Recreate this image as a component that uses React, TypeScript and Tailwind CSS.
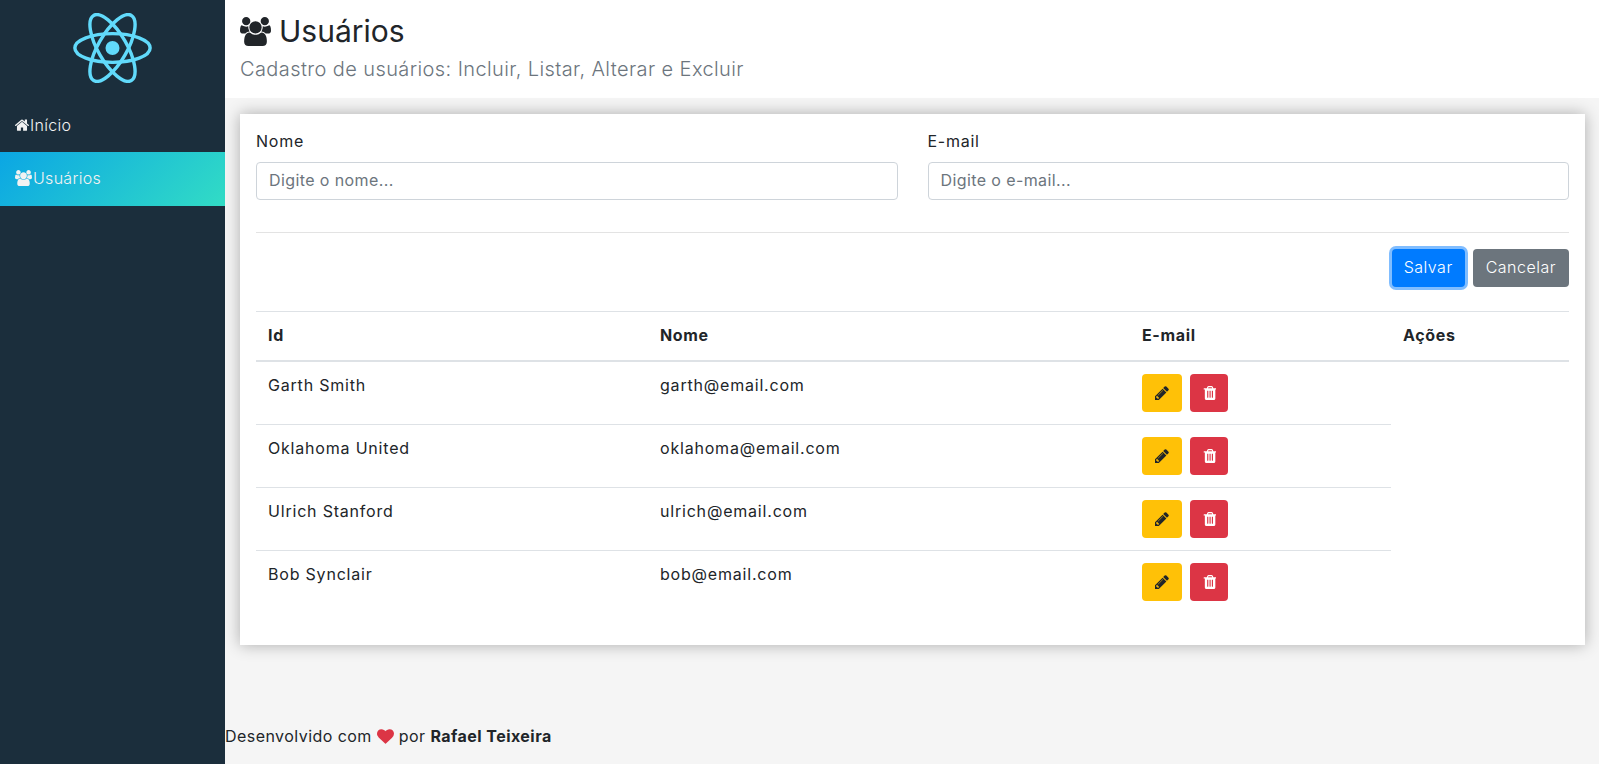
import React from 'react';

const users = [
  { name: 'Garth Smith', email: 'garth@email.com' },
  { name: 'Oklahoma United', email: 'oklahoma@email.com' },
  { name: 'Ulrich Stanford', email: 'ulrich@email.com' },
  { name: 'Bob Synclair', email: 'bob@email.com' },
];

// Font Awesome 4 style glyphs
const HomeIcon = () => (
  <svg viewBox="97 220 1600 1320" className="w-[14px] h-[12px] shrink-0" fill="currentColor">
    <path d="M1472 992v480q0 26-19 45t-45 19h-384v-384h-256v384h-384q-26 0-45-19t-19-45v-480q0-1 .5-3t.5-3l575-474 575 474q1 2 1 6zm223-69l-62 74q-8 9-21 11h-3q-13 0-21-7l-692-577-692 577q-12 8-24 7-13-2-21-11l-62-74q-8-10-7-23.5t11-21.5l719-599q32-26 76-26t76 26l244 204v-195q0-14 9-23t23-9h192q14 0 23 9t9 23v408l219 182q10 8 11 21.5t-7 23.5z" />
  </svg>
);

const UsersIcon = ({ className }: { className: string }) => (
  <svg viewBox="0 0 1920 1792" preserveAspectRatio="none" className={className} fill="currentColor">
    <path d="M593 896q-162 5-265 128h-134q-82 0-138-40.5t-56-118.5q0-353 124-353 6 0 43.5 21t97.5 42.5 119 21.5q67 0 133-23-5 37-5 66 0 139 81 256zm1071 637q0 120-73 189.5t-194 69.5h-874q-121 0-194-69.5t-73-189.5q0-53 3.5-103.5t14-109 26.5-108.5 43-97.5 62-81 85.5-53.5 111.5-20q10 0 43 21.5t73 48 107 48 135 21.5 135-21.5 107-48 73-48 43-21.5q61 0 111.5 20t85.5 53.5 62 81 43 97.5 26.5 108.5 14 109 3.5 103.5zm-1024-1277q0 106-75 181t-181 75-181-75-75-181 75-181 181-75 181 75 75 181zm704 384q0 159-112.5 271.5t-271.5 112.5-271.5-112.5-112.5-271.5 112.5-271.5 271.5-112.5 271.5 112.5 112.5 271.5zm576 225q0 78-56 118.5t-138 40.5h-134q-103-123-265-128 81-117 81-256 0-29-5-66 66 23 133 23 59 0 119-21.5t97.5-42.5 43.5-21q124 0 124 353zm-128-609q0 106-75 181t-181 75-181-75-75-181 75-181 181-75 181 75 75 181z" />
  </svg>
);

const PencilIcon = () => (
  <svg viewBox="128 128 1536 1536" className="w-[14px] h-[14px]" fill="currentColor">
    <path d="M491 1536l91-91-235-235-91 91v107h128v128h107zm523-928q0-22-22-22-10 0-17 7l-542 542q-7 7-7 17 0 22 22 22 10 0 17-7l542-542q7-7 7-17zm-54-192l416 416-832 832h-416v-416zm683 96q0 53-37 90l-166 166-416-416 166-165q36-38 90-38 53 0 91 38l235 234q37 39 37 91z" />
  </svg>
);

const TrashIcon = () => (
  <svg viewBox="128 128 1408 1536" className="w-[13px] h-[14px]" fill="currentColor">
    <path d="M704 1376v-704q0-14-9-23t-23-9h-64q-14 0-23 9t-9 23v704q0 14 9 23t23 9h64q14 0 23-9t9-23zm256 0v-704q0-14-9-23t-23-9h-64q-14 0-23 9t-9 23v704q0 14 9 23t23 9h64q14 0 23-9t9-23zm256 0v-704q0-14-9-23t-23-9h-64q-14 0-23 9t-9 23v704q0 14 9 23t23 9h64q14 0 23-9t9-23zm-544-992h448l-48-117q-7-9-17-11h-317q-10 2-17 11zm928 32v64q0 14-9 23t-23 9h-96v948q0 83-47 143.5t-113 60.5h-832q-66 0-113-58.5t-47-141.5v-952h-96q-14 0-23-9t-9-23v-64q0-14 9-23t23-9h309l70-167q15-37 54-63t79-26h320q40 0 79 26t54 63l70 167h309q14 0 23 9t9 23z" />
  </svg>
);

const HeartIcon = () => (
  <svg viewBox="0 128 1792 1536" className="inline w-[17px] h-[15px] text-[#dc3545] align-[-2px]" fill="currentColor">
    <path d="M896 1664q-26 0-44-18l-624-602q-10-8-27.5-26t-55.5-65.5-68-97.5-53.5-121-23.5-138q0-220 127-344t351-124q62 0 126.5 21.5t120 58 95.5 68.5 76 68q36-36 76-68t95.5-68.5 120-58 126.5-21.5q224 0 351 124t127 344q0 221-229 450l-623 600q-18 18-44 18z" />
  </svg>
);

const ReactLogo = () => (
  <svg viewBox="-11.5 -10.23 23 20.46" className="w-[79px] h-[70px]" fill="none">
    <circle r="2.05" fill="#61dafb" />
    <g stroke="#61dafb" strokeWidth="1">
      <ellipse rx="11" ry="4.2" />
      <ellipse rx="11" ry="4.2" transform="rotate(60)" />
      <ellipse rx="11" ry="4.2" transform="rotate(120)" />
    </g>
  </svg>
);

export default function App() {
  return (
    <div className="flex min-h-[764px] bg-[#f5f5f5] text-[#212529] text-base tracking-[0.75px] font-['Inter','Liberation_Sans',sans-serif]">
      {/* Sidebar */}
      <aside className="w-[225px] shrink-0 bg-[#1b2e3c] text-[#f2f2f2]">
        <div className="h-[100px] flex items-center justify-center pb-[4px]">
          <ReactLogo />
        </div>
        <nav className="font-light tracking-[0.3px]">
          <a className="h-[52px] pl-[15px] flex items-center pb-[2px]">
            <HomeIcon />
            <span className="ml-[1px]">Início</span>
          </a>
          <a className="h-[54px] pl-[15px] flex items-center pb-[2px] bg-[linear-gradient(135deg,#0ba6e4,#32dcc5)]">
            <UsersIcon className="w-[17px] h-[16px] shrink-0" />
            <span className="ml-[1px]">Usuários</span>
          </a>
        </nav>
      </aside>

      <div className="flex-1 flex flex-col min-w-0">
        {/* Header */}
        <header className="h-[98px] bg-white pl-[15px] pt-[10px]">
          <h1 className="flex items-center gap-[8px] text-[30px] leading-[42px] tracking-normal text-[#212529]">
            <UsersIcon className="w-[31px] h-[29px]" /> Usuários
          </h1>
          <p className="mt-[4px] text-[20px] leading-[27px] font-light tracking-[0.4px] text-[#6c757d]">
            Cadastro de usuários: Incluir, Listar, Alterar e Excluir
          </p>
        </header>

        <main className="flex-1 pl-[15px] pr-[14px] pt-[16px]">
          <div className="h-[531px] bg-white p-[16px] shadow-[0_0_15px_rgba(0,0,0,0.3)]">
            {/* Form */}
            <div className="grid grid-cols-2 gap-[30px]">
              <div>
                <label className="block mb-[8px] leading-[24px] -mt-[1px]">Nome</label>
                <input
                  placeholder="Digite o nome..."
                  className="w-full h-[38px] px-[12px] pb-[2px] border border-[#ced4da] rounded bg-white tracking-[0.4px] placeholder:text-[#6c757d] outline-none mt-[1px]"
                />
              </div>
              <div>
                <label className="block mb-[8px] leading-[24px] -mt-[1px]">E-mail</label>
                <input
                  placeholder="Digite o e-mail..."
                  className="w-full h-[38px] px-[12px] pb-[2px] border border-[#ced4da] rounded bg-white tracking-[0.4px] placeholder:text-[#6c757d] outline-none mt-[1px]"
                />
              </div>
            </div>
            <hr className="mt-[32px] border-[#e3e3e3]" />
            <div className="mt-[16px] flex justify-end gap-[8px] tracking-[0.5px]">
              <button className="h-[38px] px-[12px] pb-[2px] rounded bg-[#007bff] text-white font-light ring-[3px] ring-[#80bdff]">Salvar</button>
              <button className="h-[38px] px-[13px] pb-[2px] rounded bg-[#6c757d] text-white font-light">Cancelar</button>
            </div>

            {/* Table */}
            <table className="mt-[24px] w-full table-fixed border-collapse">
              <thead>
                <tr className="text-left tracking-[0.65px]">
                  <th className="w-[392px] h-[49px] px-[12px] pb-[2px] font-bold border-t border-b-2 border-[#dee2e6]">Id</th>
                  <th className="w-[482px] px-[12px] pb-[2px] font-bold border-t border-b-2 border-[#dee2e6]">Nome</th>
                  <th className="w-[261px] px-[12px] pb-[2px] font-bold border-t border-b-2 border-[#dee2e6]">E-mail</th>
                  <th className="px-[12px] pb-[2px] font-bold border-t border-b-2 border-[#dee2e6]">Ações</th>
                </tr>
              </thead>
              <tbody className="tracking-[0.8px]">
                {users.map((u, i) => (
                  <tr key={u.email}>
                    <td className={`px-[12px] pt-[11px] align-top leading-[24px] ${i > 0 ? 'border-t border-[#dee2e6]' : ''}`}>{u.name}</td>
                    <td className={`px-[12px] pt-[11px] align-top leading-[24px] ${i > 0 ? 'border-t border-[#dee2e6]' : ''}`}>{u.email}</td>
                    <td className={`p-[12px] align-top ${i > 0 ? 'border-t border-[#dee2e6]' : ''}`}>
                      <div className="flex gap-[8px]">
                        <button className="w-[40px] h-[38px] rounded bg-[#ffc107] flex items-center justify-center text-[#212529]">
                          <PencilIcon />
                        </button>
                        <button className="w-[38px] h-[38px] rounded bg-[#dc3545] flex items-center justify-center text-white">
                          <TrashIcon />
                        </button>
                      </div>
                    </td>
                  </tr>
                ))}
              </tbody>
            </table>
          </div>
        </main>

        <footer className="h-[60px] flex items-center pt-[4px] tracking-[0.45px]">
          <span>
            Desenvolvido com <HeartIcon /> por <strong>Rafael Teixeira</strong>
          </span>
        </footer>
      </div>
    </div>
  );
}
